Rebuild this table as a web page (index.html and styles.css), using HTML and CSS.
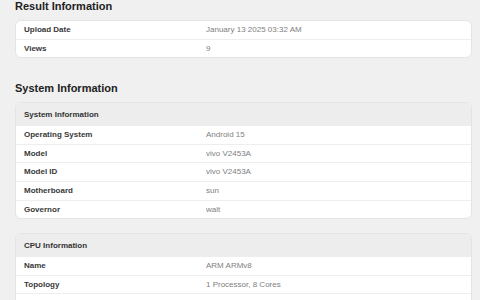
FILE: index.html
```html
<!DOCTYPE html>
<html>
<head>
<meta charset="utf-8">
<link rel="stylesheet" href="styles.css">
</head>
<body>
<section class="section">
  <h2 class="section-title first">Result Information</h2>
  <div class="card">
    <div class="row"><span class="label">Upload Date</span><span class="value">January 13 2025 03:32 AM</span></div>
    <div class="row"><span class="label">Views</span><span class="value">9</span></div>
  </div>
</section>
<section class="section">
  <h2 class="section-title">System Information</h2>
  <div class="card">
    <div class="card-head">System Information</div>
    <div class="row"><span class="label">Operating System</span><span class="value">Android 15</span></div>
    <div class="row"><span class="label">Model</span><span class="value">vivo V2453A</span></div>
    <div class="row"><span class="label">Model ID</span><span class="value">vivo V2453A</span></div>
    <div class="row"><span class="label">Motherboard</span><span class="value">sun</span></div>
    <div class="row"><span class="label">Governor</span><span class="value">walt</span></div>
  </div>
  <div class="card gap">
    <div class="card-head">CPU Information</div>
    <div class="row"><span class="label">Name</span><span class="value">ARM ARMv8</span></div>
    <div class="row"><span class="label">Topology</span><span class="value">1 Processor, 8 Cores</span></div>
    <div class="row"><span class="label">Identifier</span><span class="value">ARM implementer 65 architecture 8 variant 0 part 3458 revision 1</span></div>
  </div>
</section>
</body>
</html>
```
FILE: styles.css
```css
html, body {
  margin: 0;
  padding: 0;
  background: #f0f0f0;
  font-family: "Liberation Sans", Arial, sans-serif;
}
body {
  padding: 0 8px 0 15px;
}
.section-title {
  margin: 0;
  font-size: 11px;
  font-weight: bold;
  color: #222;
  height: 14px;
  line-height: 14px;
  margin-top: 23px;
  margin-bottom: 7px;
}
.section-title.first {
  margin-top: -1px;
  margin-bottom: 7px;
}
.card {
  background: #fff;
  border: 1px solid #e4e4e4;
  border-radius: 6px;
  overflow: hidden;
}
.card.gap {
  margin-top: 14px;
}
.card-head {
  background: #ededed;
  height: 23px;
  line-height: 23px;
  padding: 0 8px;
  font-size: 8px;
  font-weight: bold;
  color: #333;
}
.row {
  display: grid;
  grid-template-columns: 182px 1fr;
  height: 17.6px;
  line-height: 17.6px;
  padding: 0 8px;
  font-size: 8px;
  border-top: 1px solid #eeeeee;
}
.row:first-child, .card-head + .row {
  border-top: none;
}
.label {
  font-weight: bold;
  color: #383838;
}
.value {
  color: #808080;
  white-space: nowrap;
  overflow: hidden;
}
```
